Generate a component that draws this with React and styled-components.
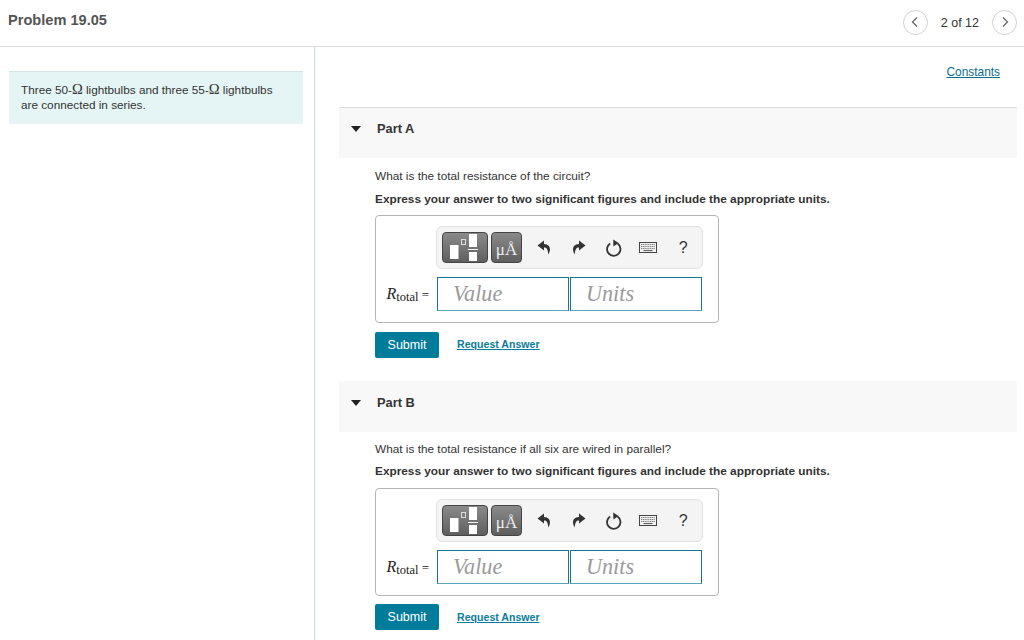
import React from "react";
import styled, { createGlobalStyle } from "styled-components";

const GlobalStyle = createGlobalStyle`
  html, body {
    margin: 0;
    padding: 0;
    background: #fff;
    overflow: hidden;
  }
  body {
    font-family: "Liberation Sans", Arial, sans-serif;
    color: #333;
  }
`;

const Page = styled.div`
  width: 1024px;
  height: 640px;
  overflow: hidden;
  display: flex;
  flex-direction: column;
`;

const Header = styled.header`
  height: 46px;
  flex: none;
  border-bottom: 1px solid #dcdcdc;
  display: flex;
  align-items: center;
  justify-content: space-between;
  padding: 0 8px;
`;

const Title = styled.h1`
  margin: -6px 0 0;
  font-size: 14.6px;
  line-height: 18px;
  font-weight: 700;
  color: #555;
`;

const Pager = styled.div`
  display: flex;
  align-items: center;
  gap: 13px;
  margin: -2px -1px 0 0;
  font-size: 12.5px;
  color: #333;
`;

const PageCount = styled.span`
  margin-top: 2px;
`;

const PagerButton = styled.button`
  width: 25px;
  height: 25px;
  padding: 0;
  border: 1px solid #d2d2d2;
  border-radius: 50%;
  background: #fff;
  display: flex;
  align-items: center;
  justify-content: center;
`;

const Body = styled.div`
  flex: 1;
  display: flex;
  min-height: 0;
`;

const Sidebar = styled.aside`
  width: 294px;
  flex: none;
  border-right: 1px solid #c9d8e2;
  padding: 24px 11px 0 9px;
`;

const Note = styled.div`
  background: #e5f5f6;
  border-top: 1px solid #d5e4e6;
  padding: 10px 10px 13px 12px;
  height: 29px;
  font-size: 11.75px;
  line-height: 15px;
  color: #333;
`;

const Omega = styled.span`
  font-family: "Liberation Serif", serif;
  font-size: 14.5px;
  line-height: 1;
`;

const Main = styled.main`
  flex: 1;
  padding: 0 7px 0 24px;
  min-width: 0;
`;

const ConstantsRow = styled.div`
  height: 60px;
  box-sizing: border-box;
  padding: 18px 17px 0 0;
  text-align: right;
  font-size: 11.9px;
  line-height: 14px;
`;

const Link = styled.a`
  color: #0b6e8c;
  text-decoration: underline;
`;

const PartHeader = styled.div`
  height: 51px;
  box-sizing: border-box;
  background: #f8f8f8;
  border-top: ${(p) => (p.$ruled ? "1px solid #dedede" : "none")};
  display: flex;
  align-items: flex-start;
  padding: ${(p) => (p.$ruled ? "13px" : "14px")} 0 0 12px;
  font-size: 12.8px;
  line-height: 15px;
  font-weight: 700;
  color: #333;
`;

const Caret = styled.span`
  width: 0;
  height: 0;
  margin: 5px 16px 0 0;
  border-left: 5px solid transparent;
  border-right: 5px solid transparent;
  border-top: 6px solid #222;
`;

const PartBody = styled.section`
  padding: ${(p) => p.$top}px 0 0 36px;
  height: ${(p) => p.$height}px;
  box-sizing: border-box;
`;

const Question = styled.p`
  margin: 0;
  font-size: 11.82px;
  line-height: 14px;
  color: #333;
`;

const Instruction = styled.p`
  margin: ${(p) => p.$gap}px 0 0;
  font-size: 11.82px;
  line-height: 14px;
  font-weight: 700;
  color: #333;
`;

const AnswerBox = styled.div`
  width: 344px;
  height: 108px;
  box-sizing: border-box;
  margin-top: ${(p) => p.$gap}px;
  border: 1px solid #b5b5b5;
  border-radius: 4px;
  padding: 10px 15px 0 10px;
  display: flex;
  flex-direction: column;
  align-items: flex-end;
  gap: 8px;
`;

const Toolbar = styled.div`
  width: 267px;
  height: 43px;
  box-sizing: border-box;
  border: 1px solid #e2e2e2;
  border-radius: 6px;
  background: #f4f4f4;
  display: flex;
  align-items: center;
  padding: 0 0 0 5px;
`;

const TemplateButton = styled.div`
  width: ${(p) => p.$width}px;
  height: 31px;
  box-sizing: border-box;
  flex: none;
  margin-right: 3px;
  border: 1px solid #444;
  border-radius: 4px;
  background: linear-gradient(180deg, #8a8a8a 0%, #5f5f5f 100%);
  display: flex;
  align-items: center;
  justify-content: center;
`;

const UnitGlyph = styled.span`
  color: #eee;
  font-family: "Liberation Serif", serif;
  font-size: 17px;
  line-height: 1;
  margin-top: 3px;
`;

const ToolSet = styled.div`
  display: flex;
  align-items: center;
  margin-left: 2px;
`;

const Tool = styled.div`
  width: 34.7px;
  flex: none;
  display: flex;
  align-items: center;
  justify-content: center;
  color: #333;
  font-size: 16px;
`;

const InputRow = styled.div`
  align-self: stretch;
  display: flex;
  align-items: center;
  justify-content: flex-end;
  gap: 1px;
  padding-right: 1px;
`;

const MathLabel = styled.span`
  margin-right: 7px;
  font-family: "Liberation Serif", serif;
  font-size: 13px;
  color: #222;

  i {
    font-size: 16px;
  }
  sub {
    font-size: 12.5px;
    line-height: 0;
    vertical-align: -2px;
  }
`;

const Field = styled.div`
  width: 132px;
  height: 34px;
  box-sizing: border-box;
  border: 1px solid #13788f;
  border-bottom-color: #5aa6b8;
  padding: 0 0 0 15px;
  display: flex;
  align-items: center;
  font-family: "Liberation Serif", serif;
  font-style: italic;
  font-size: 22.2px;
  color: #9a9a9a;
`;

const Actions = styled.div`
  margin-top: ${(p) => p.$gap}px;
  display: flex;
  align-items: center;
  gap: 18px;
`;

const SubmitButton = styled.button`
  width: 64px;
  height: 26px;
  padding: 0;
  border: none;
  border-radius: 2px;
  background: #007c9b;
  color: #fff;
  font-family: inherit;
  font-size: 12.5px;
`;

const AnswerLink = styled.a`
  color: #0b7c9c;
  font-size: 10.6px;
  font-weight: 700;
  text-decoration: underline;
  margin-top: ${(p) => p.$lift}px;
`;

const Chevron = ({ left }) => (
  <svg width="10" height="12" viewBox="0 0 10 12">
    <path
      d={left ? "M7 1.5 2.5 6 7 10.5" : "M3 1.5 7.5 6 3 10.5"}
      fill="none"
      stroke="#666"
      strokeWidth="1.3"
    />
  </svg>
);

const TemplateIcon = () => (
  <svg width="36" height="27" viewBox="0 0 36 27">
    <rect x="3" y="11" width="8.5" height="14" fill="#fff" />
    <rect x="14.5" y="5.5" width="4" height="5" fill="none" stroke="#ddd" strokeWidth="1" />
    <rect x="22" y="0" width="8" height="13" fill="#fff" />
    <rect x="21" y="15" width="10" height="1" fill="#fff" />
    <rect x="22" y="18" width="8" height="9" fill="#fff" />
  </svg>
);

const UndoIcon = ({ flip }) => (
  <svg
    width="14"
    height="15"
    viewBox="0 0 14 15"
    style={flip ? { transform: "scaleX(-1)" } : undefined}
  >
    <path
      d="M7 0.5 0.5 5.5 7 10.5V7.5c2.7 0 3.9 1.6 4.3 7 2.4-3.8 3.2-10-4.3-10.6Z"
      fill="#333"
    />
  </svg>
);

const ResetIcon = () => (
  <svg width="16" height="18" viewBox="0 0 16 18">
    <path d="M11.6 4.6a6.7 6.7 0 1 1-7.4-.2" fill="none" stroke="#333" strokeWidth="1.8" />
    <path d="M7.2 0.4 12.6 4 7.4 7.6Z" fill="#333" />
  </svg>
);

const KeyboardIcon = () => (
  <svg width="18" height="11" viewBox="0 0 18 11">
    <rect x="0.5" y="0.5" width="17" height="10" fill="#f4f4f4" stroke="#444" />
    <path
      d="M2 2.6h14M2 4.6h14M2 6.6h14"
      stroke="#777"
      strokeWidth="1"
      strokeDasharray="1.2 0.6"
    />
    <path d="M4.5 8.6h9" stroke="#555" strokeWidth="1" />
  </svg>
);

const AnswerForm = ({ gap }) => (
  <AnswerBox $gap={gap}>
    <Toolbar>
      <TemplateButton $width={46}>
        <TemplateIcon />
      </TemplateButton>
      <TemplateButton $width={31}>
        <UnitGlyph>μÅ</UnitGlyph>
      </TemplateButton>
      <ToolSet>
        <Tool>
          <UndoIcon />
        </Tool>
        <Tool>
          <UndoIcon flip />
        </Tool>
        <Tool>
          <ResetIcon />
        </Tool>
        <Tool>
          <KeyboardIcon />
        </Tool>
        <Tool>?</Tool>
      </ToolSet>
    </Toolbar>
    <InputRow>
      <MathLabel>
        <i>R</i>
        <sub>total</sub> =
      </MathLabel>
      <Field>Value</Field>
      <Field>Units</Field>
    </InputRow>
  </AnswerBox>
);

const App = () => (
  <Page>
    <GlobalStyle />
    <Header>
      <Title>Problem 19.05</Title>
      <Pager>
        <PagerButton aria-label="Previous">
          <Chevron left />
        </PagerButton>
        <PageCount>2 of 12</PageCount>
        <PagerButton aria-label="Next">
          <Chevron />
        </PagerButton>
      </Pager>
    </Header>
    <Body>
      <Sidebar>
        <Note>
          Three 50-<Omega>Ω</Omega> lightbulbs and three 55-<Omega>Ω</Omega> lightbulbs
          <br />
          are connected in series.
        </Note>
      </Sidebar>
      <Main>
        <ConstantsRow>
          <Link href="#">Constants</Link>
        </ConstantsRow>

        <PartHeader $ruled>
          <Caret />
          Part A
        </PartHeader>
        <PartBody $top={11} $height={223}>
          <Question>What is the total resistance of the circuit?</Question>
          <Instruction $gap={9}>
            Express your answer to two significant figures and include the appropriate units.
          </Instruction>
          <AnswerForm gap={9} />
          <Actions $gap={9}>
            <SubmitButton>Submit</SubmitButton>
            <AnswerLink href="#" $lift={-2}>Request Answer</AnswerLink>
          </Actions>
        </PartBody>

        <PartHeader>
          <Caret />
          Part B
        </PartHeader>
        <PartBody $top={10} $height={210}>
          <Question>What is the total resistance if all six are wired in parallel?</Question>
          <Instruction $gap={8}>
            Express your answer to two significant figures and include the appropriate units.
          </Instruction>
          <AnswerForm gap={10} />
          <Actions $gap={8}>
            <SubmitButton>Submit</SubmitButton>
            <AnswerLink href="#" $lift={0}>Request Answer</AnswerLink>
          </Actions>
        </PartBody>
      </Main>
    </Body>
  </Page>
);

export default App;
